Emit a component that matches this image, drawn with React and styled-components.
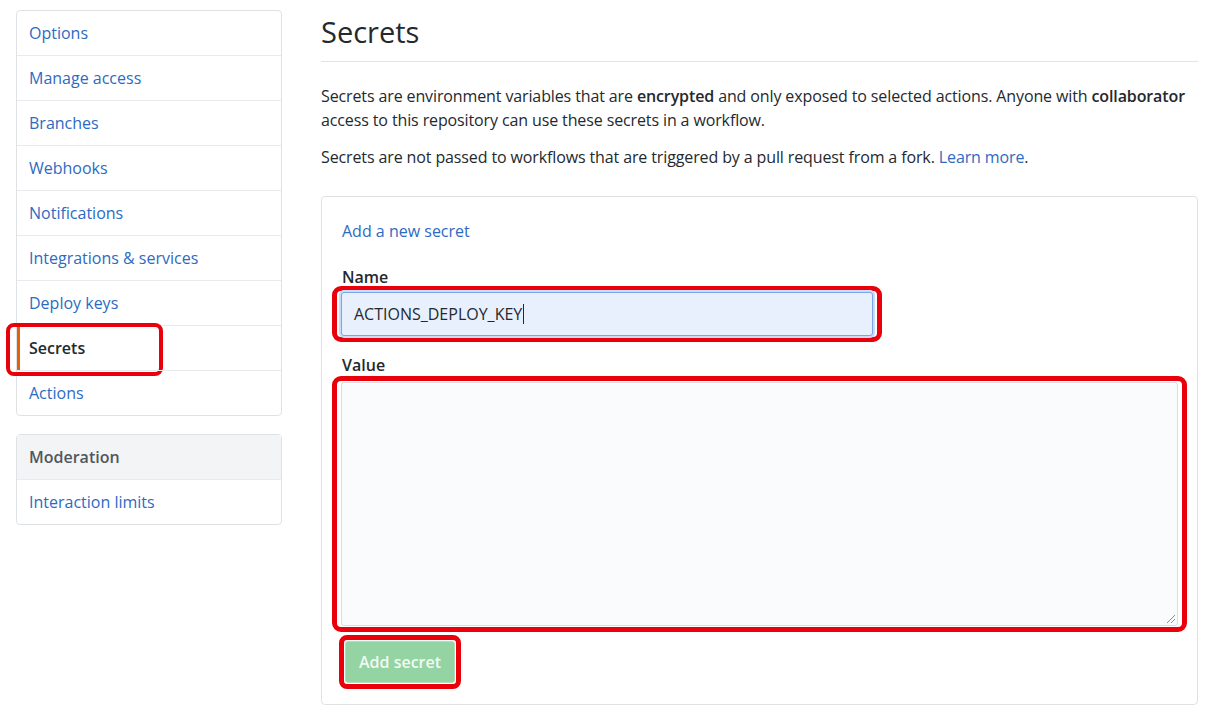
import React from 'react';
import styled, { createGlobalStyle } from 'styled-components';

const GlobalStyle = createGlobalStyle`
  body {
    margin: 0;
    background: #ffffff;
    font-family: "Open Sans", "Noto Sans", Arial, sans-serif;
    color: #24292e;
  }
`;

const navItems = [
  'Options',
  'Manage access',
  'Branches',
  'Webhooks',
  'Notifications',
  'Integrations & services',
  'Deploy keys',
  'Secrets',
  'Actions',
];

const App = () => {
  return (
    <Page>
      <GlobalStyle />
      <Sidebar>
        <Menu>
          {navItems.map((item) => (
            <MenuItem key={item} $active={item === 'Secrets'}>
              {item}
              {item === 'Secrets' && <SideHighlight />}
            </MenuItem>
          ))}
        </Menu>
        <Menu>
          <MenuHeading>Moderation</MenuHeading>
          <MenuItem>Interaction limits</MenuItem>
        </Menu>
      </Sidebar>

      <Main>
        <Title>Secrets</Title>
        <Text>
          Secrets are environment variables that are <b>encrypted</b> and only exposed to
          selected actions. Anyone with <b>collaborator</b> access to this repository can use
          these secrets in a workflow.
        </Text>
        <Text>
          Secrets are not passed to workflows that are triggered by a pull request from a fork.{' '}
          <Link>Learn more</Link>.
        </Text>

        <Box>
          <Link>Add a new secret</Link>
          <Label $top={24}>Name</Label>
          <Marked $width={550} $shift={-2}>
            <NameInput>
              ACTIONS_DEPLOY_KEY<Caret />
            </NameInput>
          </Marked>
          <Label $top={12}>Value</Label>
          <Marked $shift={0}>
            <ValueArea>
              <Grip viewBox="0 0 12 12">
                <path d="M11 3 L3 11 M11 7 L7 11" stroke="#8a8f96" strokeWidth="1" />
              </Grip>
            </ValueArea>
          </Marked>
          <ButtonMark>
            <SubmitButton>Add secret</SubmitButton>
          </ButtonMark>
        </Box>
      </Main>
    </Page>
  );
};

const Page = styled.div`
  display: flex;
  align-items: flex-start;
  gap: 39px;
  padding: 10px 16px 0 16px;
  width: 1214px;
  box-sizing: border-box;
`;

const Sidebar = styled.div`
  width: 266px;
  flex-shrink: 0;
  display: flex;
  flex-direction: column;
  gap: 18px;
`;

const Menu = styled.div`
  border: 1px solid #dfe2e5;
  border-radius: 4px;
  background: #fff;
`;

const MenuItem = styled.div`
  position: relative;
  height: 44px;
  display: flex;
  align-items: center;
  padding-left: 12px;
  font-size: 16px;
  color: ${(p) => (p.$active ? '#24292e' : '#2d6bc2')};
  font-weight: ${(p) => (p.$active ? 600 : 400)};
  border-top: 1px solid #e8eaed;
  box-shadow: ${(p) => (p.$active ? 'inset 3px 0 0 #e36209' : 'none')};

  &:first-child {
    border-top: none;
  }
`;

const MenuHeading = styled.div`
  height: 44px;
  display: flex;
  align-items: center;
  padding-left: 12px;
  background: #f3f4f6;
  color: #51575e;
  font-weight: 600;
  font-size: 16px;
`;

const SideHighlight = styled.span`
  position: absolute;
  left: -11px;
  top: -3px;
  width: 149px;
  height: 45px;
  border: 4px solid #e8000b;
  border-radius: 8px;
  pointer-events: none;
`;

const Main = styled.div`
  width: 877px;
  flex-shrink: 0;
`;

const Title = styled.h1`
  margin: 0;
  padding: 3px 0 10px 0;
  font-size: 29px;
  font-weight: 400;
  line-height: 38px;
  border-bottom: 1px solid #e1e4e8;
  color: #24292e;
`;

const Text = styled.p`
  margin: 22px 0 0 0;
  font-size: 16px;
  line-height: 24px;
  letter-spacing: -0.12px;
  color: #24292e;

  & + & {
    margin-top: 13px;
  }

  b {
    font-weight: 600;
  }
`;

const Link = styled.span`
  color: #2d6bc2;
  font-size: 16px;
`;

const Box = styled.div`
  margin-top: 27px;
  border: 1px solid #dfe2e5;
  border-radius: 4px;
  padding: 23px 10px 17px 20px;
  display: flex;
  flex-direction: column;
  align-items: flex-start;
  height: 509px;
  box-sizing: border-box;
`;

const Label = styled.div`
  margin-top: ${(p) => p.$top}px;
  font-size: 16px;
  font-weight: 600;
  line-height: 22px;
`;

const Marked = styled.div`
  margin-left: -10px;
  margin-top: ${(p) => p.$shift}px;
  width: ${(p) => (p.$width ? `${p.$width}px` : 'calc(100% + 10px)')};
  box-sizing: border-box;
  border: 5px solid #e8000b;
  border-radius: 9px;
  padding: 1px 4px;
`;

const NameInput = styled.div`
  height: 44px;
  box-sizing: border-box;
  background: #e8f0fe;
  border: 1px solid #7aa5e6;
  box-shadow: 0 0 0 2px #c9dbf6;
  border-radius: 3px;
  display: flex;
  align-items: center;
  padding-left: 12px;
  font-size: 16px;
  color: #24292e;
`;

const Caret = styled.span`
  display: inline-block;
  width: 1px;
  height: 20px;
  background: #24292e;
  margin-left: 1px;
`;

const ValueArea = styled.div`
  position: relative;
  height: 244px;
  box-sizing: border-box;
  background: #fafbfc;
  border: 1px solid #d9dde2;
  border-radius: 3px;
`;

const Grip = styled.svg`
  position: absolute;
  right: 1px;
  bottom: 1px;
  width: 12px;
  height: 12px;
`;

const ButtonMark = styled.div`
  margin-top: 3px;
  margin-left: -3px;
  border: 5px solid #e8000b;
  border-radius: 8px;
  padding: 1px;
`;

const SubmitButton = styled.div`
  width: 110px;
  height: 42px;
  box-sizing: border-box;
  background: #94d3a2;
  border: 1px solid #b6dcbf;
  border-radius: 3px;
  color: #f0faf2;
  font-weight: 600;
  font-size: 16px;
  display: flex;
  align-items: center;
  justify-content: center;
`;

export default App;
